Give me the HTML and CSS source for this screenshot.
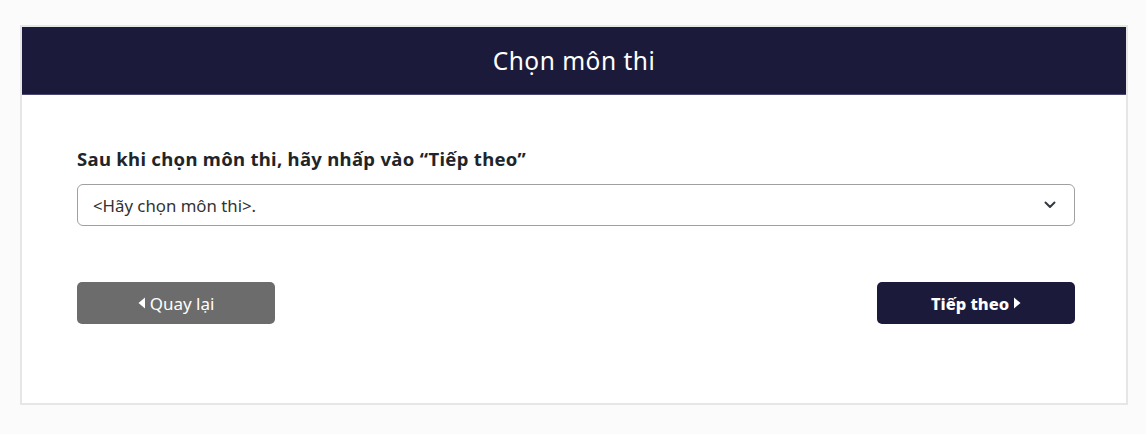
FILE: index.html
```html
<!DOCTYPE html>
<html lang="vi">
<head>
<meta charset="utf-8">
<link rel="stylesheet" href="styles.css">
</head>
<body>
<div class="card">
  <div class="card-header">Chọn môn thi</div>
  <div class="card-body">
    <label class="label">Sau khi chọn môn thi, hãy nhấp vào “Tiếp theo”</label>
    <div class="select">
      <span>&lt;Hãy chọn môn thi&gt;.</span>
      <svg class="chev" width="12" height="8" viewBox="0 0 12 8"><path d="M1.5 1.5 L6 6 L10.5 1.5" fill="none" stroke="#343a40" stroke-width="2" stroke-linecap="round" stroke-linejoin="round"/></svg>
    </div>
    <div class="actions">
      <button class="btn btn-back"><svg width="8" height="12" viewBox="0 0 8 12"><path d="M7 0.5 L0.5 6 L7 11.5 Z" fill="#fff"/></svg>Quay lại</button>
      <button class="btn btn-next">Tiếp theo<svg width="8" height="12" viewBox="0 0 8 12"><path d="M1 0.5 L7.5 6 L1 11.5 Z" fill="#fff"/></svg></button>
    </div>
  </div>
</div>
</body>
</html>
```
FILE: styles.css
```css
* { box-sizing: border-box; }
html, body { margin: 0; padding: 0; }
body {
  background: #fbfbfb;
  font-family: "Noto Sans", "Open Sans", sans-serif;
  color: #212529;
  padding: 25px 18px 0 20px;
  height: 434px;
}
.card {
  width: 1108px;
  height: 380px;
  border: 2px solid #e6e6e6;
  background: #fff;
}
.card-header {
  height: 68px;
  background: #1c1a3b;
  border-bottom: 1px solid #4a4870;
  color: #fff;
  font-size: 24.5px;
  letter-spacing: 0.5px;
  display: flex;
  align-items: center;
  justify-content: center;
}
.card-body {
  padding: 52px 51px 0 55px;
  display: flex;
  flex-direction: column;
}
.label {
  font-size: 18.5px;
  font-weight: 700;
  letter-spacing: 0.3px;
  line-height: 24px;
  margin-bottom: 13px;
}
.select {
  height: 42px;
  border: 1px solid #a0a0a0;
  border-radius: 6px;
  display: flex;
  align-items: center;
  justify-content: space-between;
  padding: 0 18px 0 15px;
  font-size: 16.8px;
  color: #333;
}
.actions {
  display: flex;
  justify-content: space-between;
  margin-top: 56px;
}
.btn {
  width: 198px;
  height: 42px;
  border: none;
  border-radius: 5px;
  color: #fff;
  font-family: inherit;
  font-size: 17px;
  display: flex;
  align-items: center;
  justify-content: center;
  gap: 4px;
  padding: 0;
}
.btn-back { background: #6c6c6c; }
.btn-next { background: #1c1a3b; font-weight: 800; font-size: 16.5px; }
```
